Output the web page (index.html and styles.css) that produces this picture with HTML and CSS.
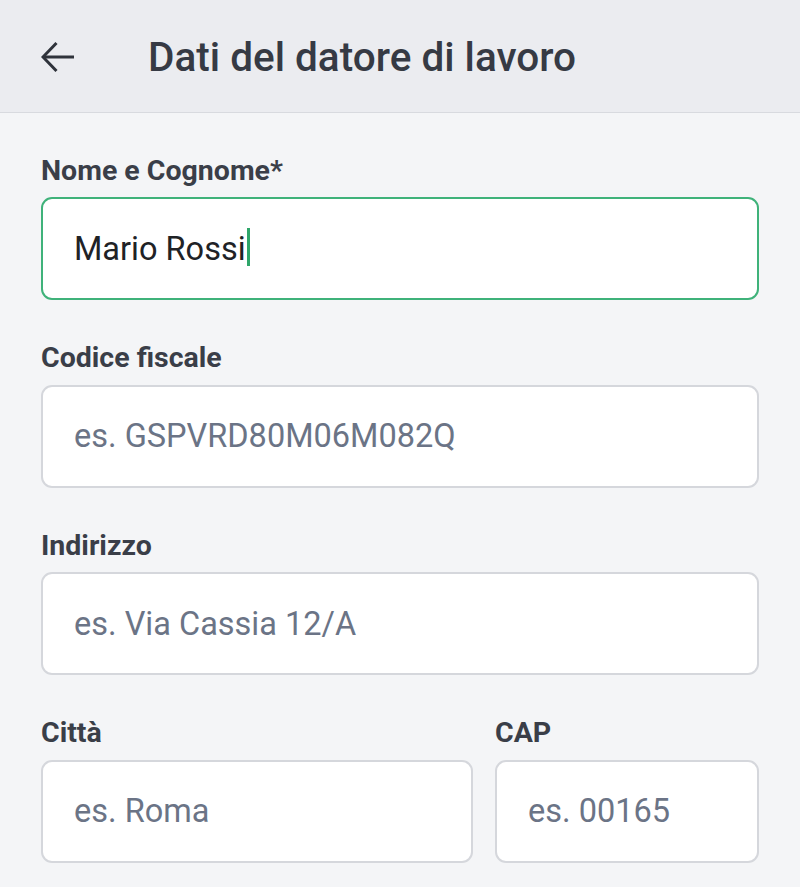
FILE: index.html
```html
<!DOCTYPE html>
<html lang="it">
<head>
<meta charset="utf-8">
<title>Dati del datore di lavoro</title>
<link rel="stylesheet" href="styles.css">
</head>
<body>
<header class="topbar">
  <button class="back" aria-label="Indietro">
    <svg width="34" height="32" viewBox="0 0 34 32" fill="none" stroke="#2f333b" stroke-width="3" stroke-linejoin="miter">
      <path d="M2 16H33"/>
      <path d="M15.5 2L2 16L15.5 30"/>
    </svg>
  </button>
  <h1 class="title">Dati del datore di lavoro</h1>
</header>
<main class="form">
  <div class="group">
    <label class="label">Nome e Cognome*</label>
    <div class="field focused"><span class="value">Mario Rossi</span><span class="caret"></span></div>
  </div>
  <div class="group">
    <label class="label">Codice fiscale</label>
    <div class="field"><span class="ph">es. GSPVRD80M06M082Q</span></div>
  </div>
  <div class="group">
    <label class="label">Indirizzo</label>
    <div class="field"><span class="ph">es. Via Cassia 12/A</span></div>
  </div>
  <div class="row">
    <div class="group">
      <label class="label">Città</label>
      <div class="field"><span class="ph">es. Roma</span></div>
    </div>
    <div class="group">
      <label class="label">CAP</label>
      <div class="field"><span class="ph">es. 00165</span></div>
    </div>
  </div>
</main>
</body>
</html>
```
FILE: styles.css
```css
* { box-sizing: border-box; }
html, body { margin: 0; padding: 0; }
body {
  background: #f4f5f7;
  font-family: Roboto, "Liberation Sans", sans-serif;
  width: 800px;
  height: 887px;
  overflow: hidden;
}
.topbar {
  height: 113px;
  background: #ebecf0;
  border-bottom: 1px solid #d8dadf;
  display: flex;
  align-items: center;
  padding-left: 41px;
}
.back {
  background: none;
  border: 0;
  padding: 0;
  margin: 0;
  width: 34px;
  height: 32px;
  display: flex;
  margin-top: 1px;
}
.title {
  margin: 2px 0 0 73px;
  font-size: 40.5px;
  font-weight: 500;
  color: #363a44;
  line-height: 1;
}
.form {
  padding: 40.5px 41px 0 41px;
  display: flex;
  flex-direction: column;
  gap: 41px;
}
.group {
  display: flex;
  flex-direction: column;
  gap: 9px;
}
.label {
  font-size: 28.5px;
  font-weight: 700;
  color: #3a3e48;
  line-height: 34.5px;
}
.field {
  height: 103px;
  flex: none;
  background: #fff;
  border: 2px solid #d5d7dc;
  border-radius: 11px;
  display: flex;
  align-items: center;
  padding-left: 31px;
  font-size: 32.5px;
}
.field.focused { border-color: #3fb27a; }
.value { color: #202226; }
.caret {
  width: 3px;
  height: 38px;
  background: #2fa66a;
  margin-left: 1px;
  margin-top: -3px;
}
.ph { color: #6b7486; }
.row {
  display: grid;
  grid-template-columns: 1fr 264px;
  gap: 22px;
}
```
